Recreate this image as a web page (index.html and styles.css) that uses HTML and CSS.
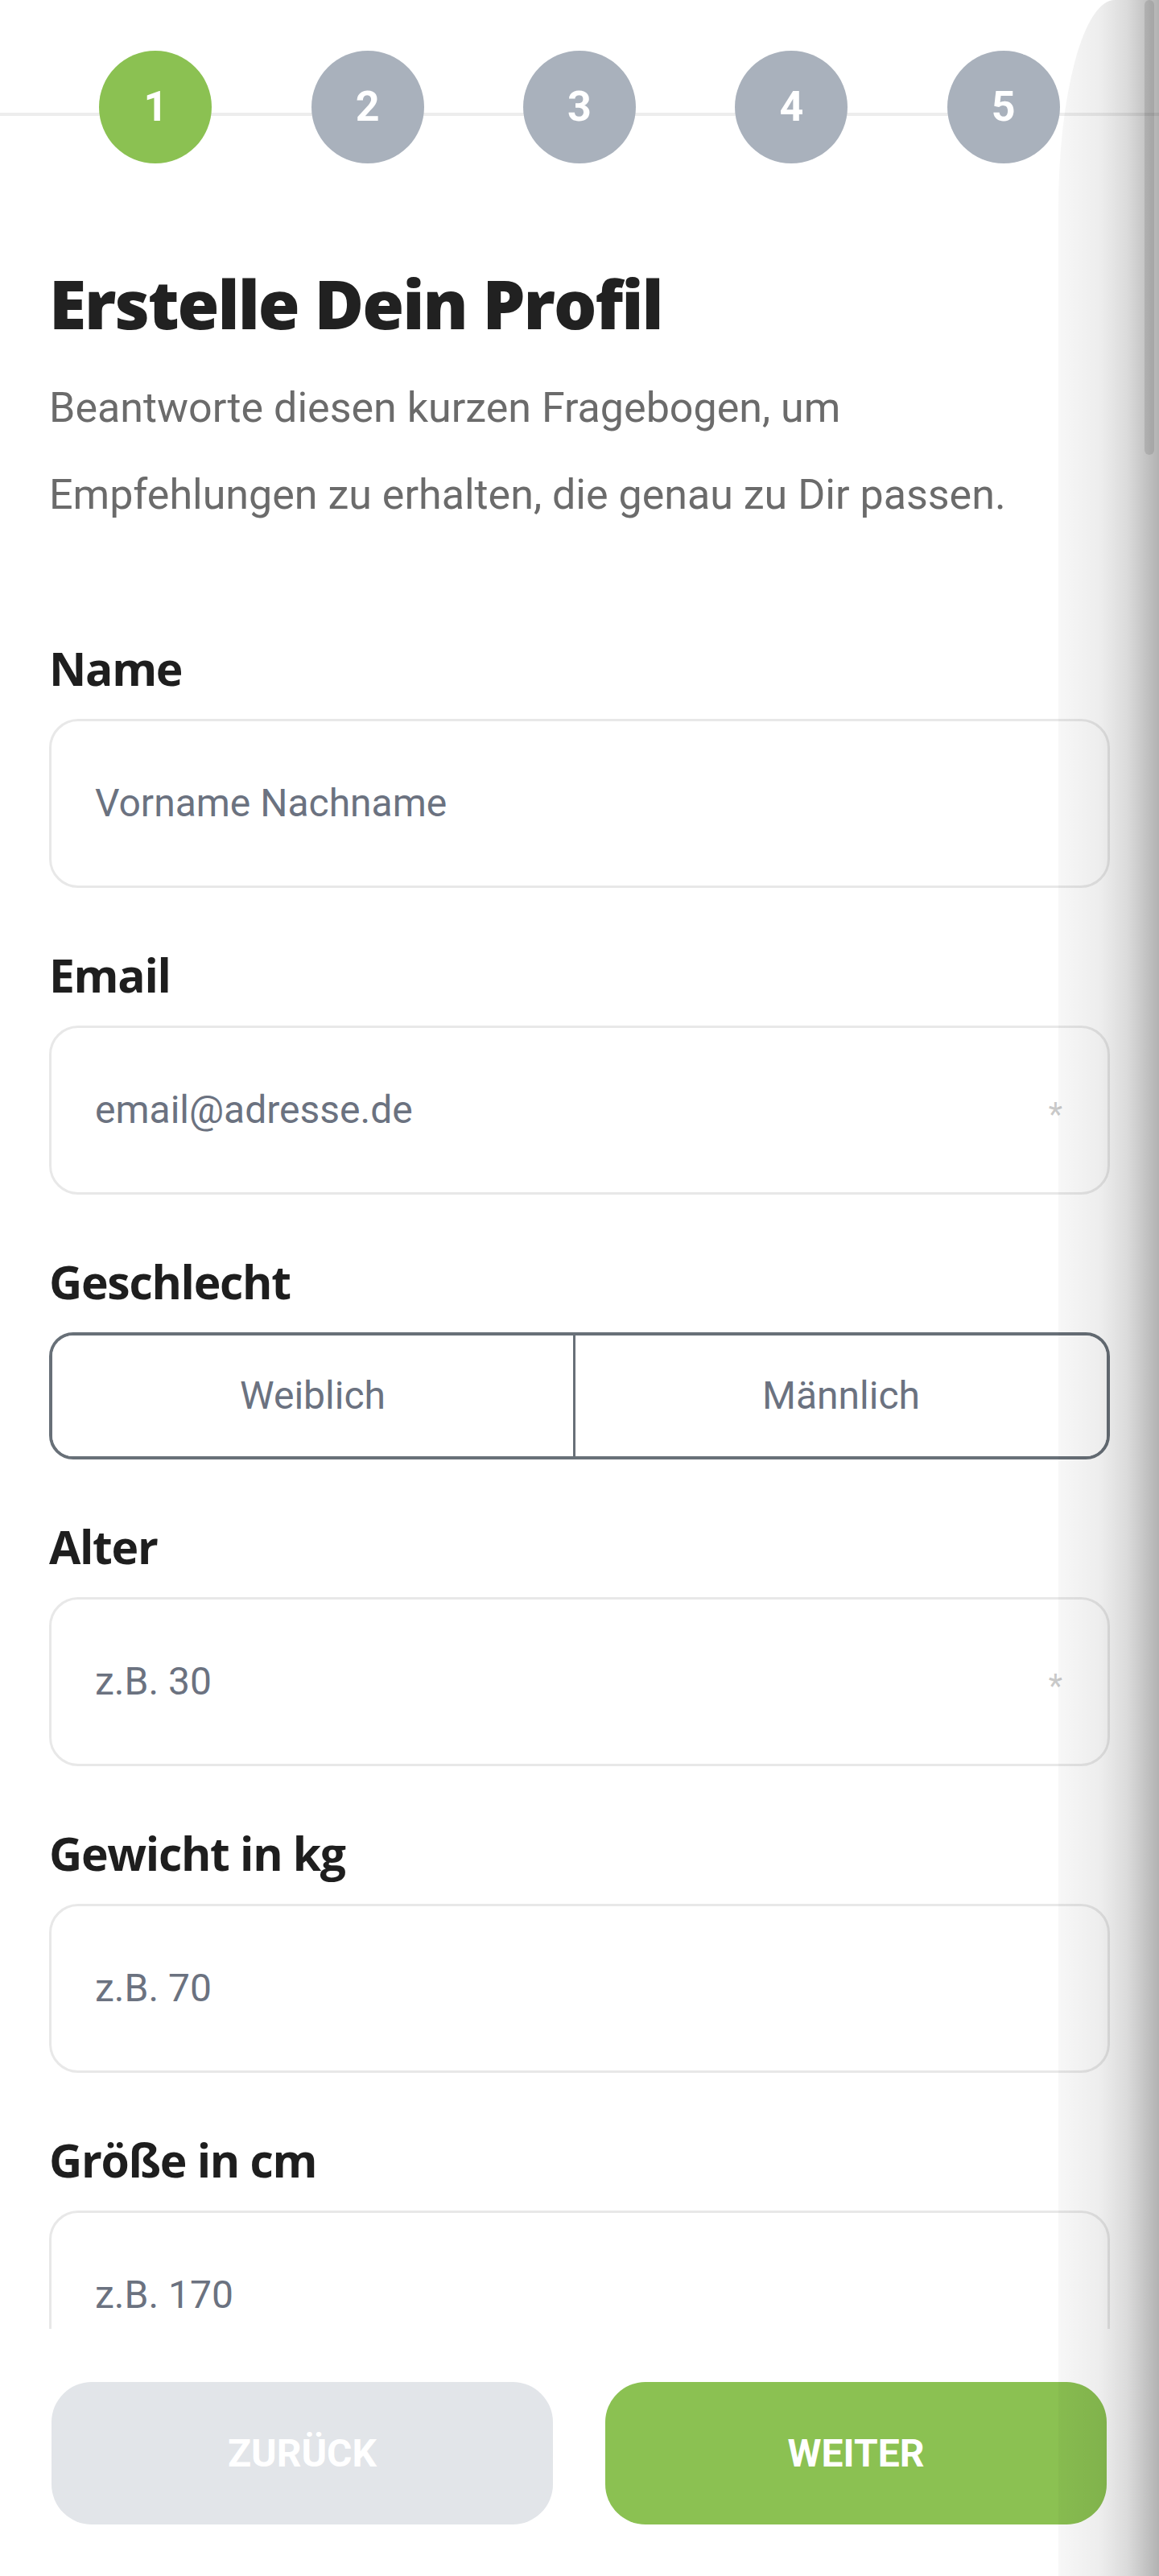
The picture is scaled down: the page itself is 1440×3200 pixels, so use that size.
FILE: index.html
```html
<!DOCTYPE html>
<html lang="de">
<head>
<meta charset="utf-8">
<title>Erstelle Dein Profil</title>
<link rel="stylesheet" href="styles.css">
</head>
<body>
<div class="app">
  <main class="scroll">
    <nav class="stepper">
      <span class="step active">1</span>
      <span class="step">2</span>
      <span class="step">3</span>
      <span class="step">4</span>
      <span class="step">5</span>
    </nav>
    <section class="content">
      <h1 class="title">Erstelle Dein Profil</h1>
      <p class="lead">Beantworte diesen kurzen Fragebogen, um<br>Empfehlungen zu erhalten, die genau zu Dir passen.</p>
      <form class="form">
        <div class="field">
          <label class="label">Name</label>
          <div class="input-box"><input type="text" placeholder="Vorname Nachname"></div>
        </div>
        <div class="field">
          <label class="label">Email</label>
          <div class="input-box"><input type="email" placeholder="email@adresse.de"><span class="req">*</span></div>
        </div>
        <div class="field">
          <label class="label">Geschlecht</label>
          <div class="segmented">
            <button type="button" class="seg">Weiblich</button>
            <button type="button" class="seg">Männlich</button>
          </div>
        </div>
        <div class="field">
          <label class="label">Alter</label>
          <div class="input-box"><input type="text" placeholder="z.B. 30"><span class="req">*</span></div>
        </div>
        <div class="field">
          <label class="label">Gewicht in kg</label>
          <div class="input-box"><input type="text" placeholder="z.B. 70"></div>
        </div>
        <div class="field">
          <label class="label">Größe in cm</label>
          <div class="input-box"><input type="text" placeholder="z.B. 170"></div>
        </div>
      </form>
    </section>
  </main>
  <footer class="footer">
    <button type="button" class="btn btn-back">ZURÜCK</button>
    <button type="button" class="btn btn-next">WEITER</button>
  </footer>
  <div class="shade"></div>
  <div class="thumb"></div>
</div>
</body>
</html>
```
FILE: styles.css
```css
* { box-sizing: border-box; }

body {
  margin: 0;
  background: #ffffff;
  font-family: Roboto, "Noto Sans", sans-serif;
}

.app {
  position: relative;
  width: 1440px;
  height: 3200px;
  overflow: hidden;
  display: flex;
  flex-direction: column;
}

.scroll {
  flex: none;
  height: 2893px;
  overflow: hidden;
}

/* stepper */
.stepper {
  position: relative;
  display: flex;
  justify-content: space-evenly;
  padding-top: 63px;
}
.stepper::before {
  content: "";
  position: absolute;
  left: 0;
  right: 0;
  top: 140px;
  height: 4px;
  background: #ededed;
}
.step {
  position: relative;
  width: 140px;
  height: 140px;
  border-radius: 50%;
  background: #a9b1bc;
  color: #ffffff;
  font: 700 52px/140px Roboto, sans-serif;
  text-align: center;
}
.step.active { background: #8bc152; }

/* content */
.content { padding: 0 61px; }

.title {
  margin: 124px 0 0;
  font: 800 84px/1.2 "Open Sans", sans-serif;
  letter-spacing: -2px;
  color: #212121;
}

.lead {
  margin: 25px 0 0;
  font: 400 52px/108px Roboto, sans-serif;
  color: #6b6b6b;
}

.form { margin-top: 127px; }

.field + .field { margin-top: 74px; }

.label {
  display: block;
  margin-bottom: 29px;
  font: 700 57px/68px "Open Sans", sans-serif;
  letter-spacing: -1.3px;
  color: #1e1e1e;
}

.input-box {
  display: flex;
  align-items: center;
  height: 210px;
  padding: 0 56px 0 54px;
  border: 3px solid #e8e8e8;
  border-radius: 36px;
  background: #ffffff;
}
.input-box input {
  flex: 1;
  min-width: 0;
  padding: 0;
  border: 0;
  outline: 0;
  background: transparent;
  font: 400 48px Roboto, sans-serif;
  color: #333333;
}
.input-box input::placeholder {
  color: #6b7280;
  opacity: 1;
}
.req {
  margin-top: 12px;
  font: 400 40px/1 Roboto, sans-serif;
  color: #c9c9c9;
}

.segmented {
  display: grid;
  grid-template-columns: 651fr 667fr;
  height: 158px;
  border: 4px solid #687078;
  border-radius: 30px;
  overflow: hidden;
}
.seg {
  border: 0;
  background: #ffffff;
  font: 400 48px Roboto, sans-serif;
  color: #6b7280;
}
.seg + .seg { border-left: 3px solid #687078; }

/* footer */
.footer {
  flex: 1;
  display: flex;
  align-items: flex-start;
  gap: 65px;
  padding: 66px 65px 0 64px;
  background: #ffffff;
}
.btn {
  flex: 1;
  height: 177px;
  border: 0;
  border-radius: 50px;
  font: 700 48px Roboto, sans-serif;
  color: #ffffff;
}
.btn-back { background: #e2e5e9; }
.btn-next { background: #8bc152; }

/* right edge overscroll shade + scrollbar */
.shade {
  position: absolute;
  top: 0;
  right: 0;
  bottom: 0;
  width: 125px;
  border-top-left-radius: 70px 260px;
  background: linear-gradient(to right,
    rgba(0,0,0,0.03) 0%,
    rgba(0,0,0,0.07) 42%,
    rgba(0,0,0,0.14) 68%,
    rgba(0,0,0,0.22) 84%,
    rgba(0,0,0,0.30) 100%);
  pointer-events: none;
}
.thumb {
  position: absolute;
  top: 0;
  right: 6px;
  width: 12px;
  height: 565px;
  border-radius: 6px;
  background: rgba(0,0,0,0.1);
}
```
